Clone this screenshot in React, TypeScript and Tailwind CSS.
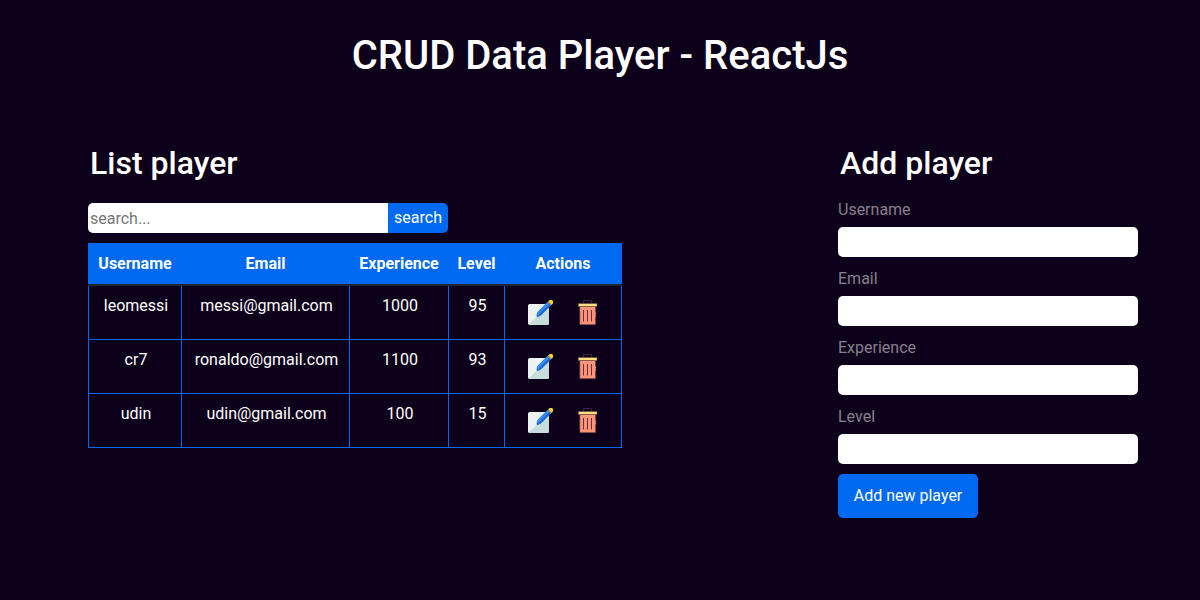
import { useState } from "react";

type Player = {
  username: string;
  email: string;
  experience: number;
  level: number;
};

const players: Player[] = [
  { username: "leomessi", email: "messi@gmail.com", experience: 1000, level: 95 },
  { username: "cr7", email: "ronaldo@gmail.com", experience: 1100, level: 93 },
  { username: "udin", email: "udin@gmail.com", experience: 100, level: 15 },
];

const columns = ["Username", "Email", "Experience", "Level", "Actions"];
const fields = ["Username", "Email", "Experience", "Level"];

function EditIcon() {
  return (
    <svg viewBox="0 0 26 26" className="size-[26px]" aria-hidden="true">
      <rect x="1" y="4" width="21" height="21" rx="1.8" fill="#edf3f3" />
      <path d="M22 5.200v18a1.800 1.800 0 0 1-1.800 1.800h-17.400a1.800 1.800 0 0 1-1.270-.530z" fill="#c7dcdc" />
      <path d="M11.300 11.300L20.500 2.100l3.400 3.400-9.200 9.200c-1.200 1.200-3 2.100-4.900 2.400-.5-2 .1-4.300 1.500-5.800z" fill="#1c66d2" />
      <path d="M11.300 11.300L20.500 2.100l1.900 1.900L10.300 16.100c-.3-1.800 0-3.600 1-4.800z" fill="#348cf0" />
      <path d="M20.200 2.400l1.300-1.300 3.400 3.400-1.300 1.300z" fill="#77889a" />
      <path d="M21.300 1.300l.8-.8a2.360 2.360 0 0 1 3.400 3.400l-.8.800z" fill="#ffd51f" />
    </svg>
  );
}

function TrashIcon() {
  return (
    <svg viewBox="0 0 26 26" className="size-[26px]" aria-hidden="true">
      <path d="M8.500 3.500v-3h8v3" fill="none" stroke="#3c2140" strokeWidth="1" />
      <path d="M4.800 6.500h15.800v18.200H4.800z" fill="#ff9478" stroke="#58303f" strokeWidth=".6" />
      <path d="M3.300 3.500h18.700v3H3.300z" fill="#ffdf79" stroke="#65404b" strokeWidth=".6" />
      <path d="M8.500 10v11.500M12.500 10v11.500M16.500 10v11.500" stroke="#692d3f" strokeWidth="1" />
      <path d="M20.600 12.800v1.400M20.600 15.200v1.200" stroke="#ff9478" strokeWidth="1" />
    </svg>
  );
}

export default function App() {
  const [query, setQuery] = useState("");

  return (
    <main className="min-h-screen bg-[#0d001a] pt-8 pb-12 font-['Roboto',sans-serif] text-base text-white">
      <h1 className="text-center text-[40px] leading-12 font-medium">CRUD Data Player - ReactJs</h1>

      <div className="mt-16 flex items-start justify-between gap-12 pr-[62px] pl-[88px]">
        <section>
          <h2 className="pl-0.5 text-[32px] leading-[38px] font-medium">List player</h2>

          <form className="mt-[21px] flex" onSubmit={(event) => event.preventDefault()}>
            <input
              type="search"
              aria-label="Search players"
              placeholder="search..."
              value={query}
              onChange={(event) => setQuery(event.target.value)}
              className="h-[30px] w-[300px] rounded-l-[5px] bg-white px-0.5 text-black outline-none placeholder:text-[#757575]"
            />
            <button type="submit" className="h-[30px] w-[60px] rounded-r-[5px] bg-[#0069f2] leading-6">
              search
            </button>
          </form>

          <table className="mt-2.5 w-[534px] table-fixed border-collapse text-center">
            <colgroup>
              <col className="w-[93px]" />
              <col className="w-[168px]" />
              <col className="w-[99px]" />
              <col className="w-[56px]" />
              <col />
            </colgroup>
            <thead>
              <tr className="h-[41px] border-b-2 border-b-[#212529] bg-[#0069f2]">
                {columns.map((column) => (
                  <th key={column} className="border-x border-t border-x-[#0069f2] border-t-[#0069f2] p-0 leading-6 font-bold">
                    {column}
                  </th>
                ))}
              </tr>
            </thead>
            <tbody>
              {players.map((player) => (
                <tr key={player.username} className="h-[54px] align-top first:h-[55px]">
                  <td className="border border-[#0069f2] py-2 pr-0 pl-0.5 leading-6">{player.username}</td>
                  <td className="border border-[#0069f2] py-2 pr-0 pl-0.5 leading-6">{player.email}</td>
                  <td className="border border-[#0069f2] py-2 pr-0 pl-0.5 leading-6">{player.experience}</td>
                  <td className="border border-[#0069f2] py-2 pr-0 pl-0.5 leading-6">{player.level}</td>
                  <td className="border border-[#0069f2] py-0 pr-0 pl-0.5">
                    <div className="flex justify-center gap-[22px] pt-3.5">
                      <button type="button" aria-label={`Edit ${player.username}`}>
                        <EditIcon />
                      </button>
                      <button type="button" aria-label={`Delete ${player.username}`}>
                        <TrashIcon />
                      </button>
                    </div>
                  </td>
                </tr>
              ))}
            </tbody>
          </table>
        </section>

        <section>
          <h2 className="pl-0.5 text-[32px] leading-[38px] font-medium">Add player</h2>

          <form className="mt-4 flex flex-col items-start gap-2.5" onSubmit={(event) => event.preventDefault()}>
            {fields.map((field) => (
              <div key={field} className="flex flex-col gap-[5px]">
                <label htmlFor={field} className="leading-6 text-white/50">
                  {field}
                </label>
                <input
                  id={field}
                  type={field === "Email" ? "email" : "text"}
                  className="h-[30px] w-[300px] rounded-[5px] bg-white px-0.5 text-black outline-none"
                />
              </div>
            ))}
            <button type="submit" className="w-[140px] rounded-[5px] bg-[#0069f2] py-2.5 leading-6">
              Add new player
            </button>
          </form>
        </section>
      </div>
    </main>
  );
}
